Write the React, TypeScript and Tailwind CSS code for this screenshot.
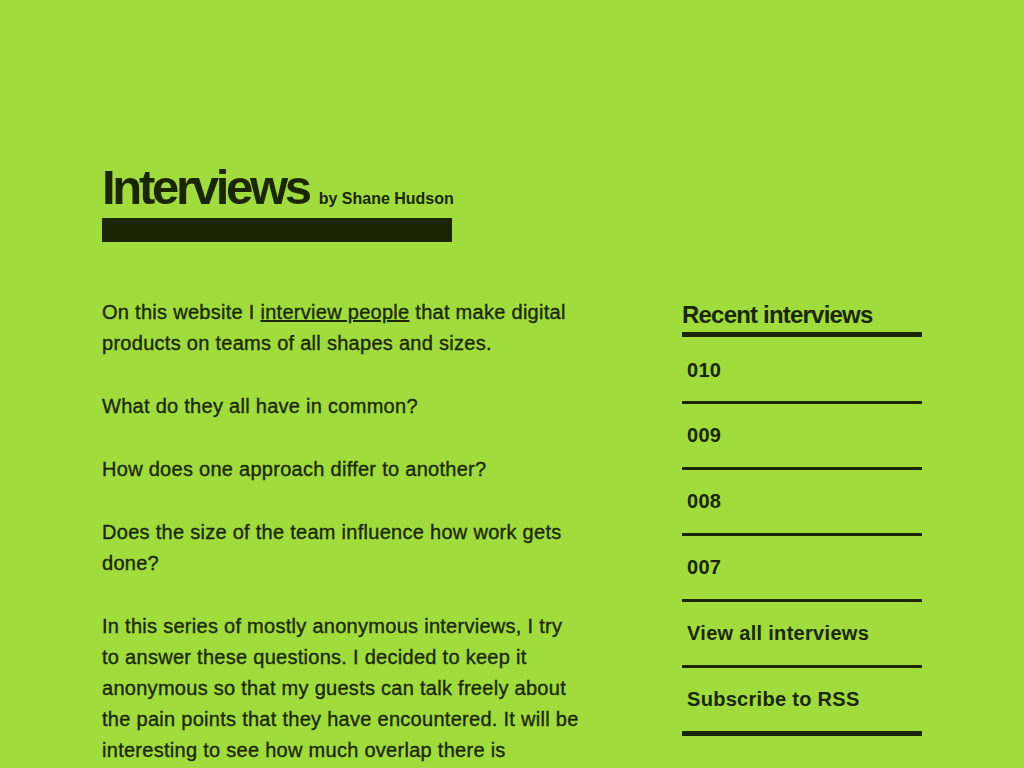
export default function App() {
  const items = ["010", "009", "008", "007", "View all interviews", "Subscribe to RSS"];
  return (
    <div className="min-h-[768px] bg-[#a0dd3c] text-[#1b2600]" style={{ fontFamily: '"Liberation Sans", Arial, sans-serif' }}>
      <div className="mx-auto w-[820px] pt-[163px]">
        <header className="inline-block">
          <h1 className="flex items-baseline gap-[10px] leading-none">
            <span className="text-[49px] font-bold tracking-[-3.3px]">Interviews</span>
            <span className="text-[16px] font-bold">by Shane Hudson</span>
          </h1>
          <div className="mt-[6px] h-[24px] w-[350px] bg-[#1b2600]" />
        </header>
        <div className="mt-[55px] flex justify-between">
          <main className="w-[478px] text-[20px] leading-[31px] tracking-[0.28px] [-webkit-text-stroke:0.35px_#1b2600]">
            <p>
              On this website I <a href="#" className="underline">interview people</a> that make digital products on teams of all shapes and sizes.
            </p>
            <p className="mt-[32px]">What do they all have in common?</p>
            <p className="mt-[32px]">How does one approach differ to another?</p>
            <p className="mt-[32px]">Does the size of the team influence how work gets done?</p>
            <p className="mt-[32px]">
              In this series of mostly anonymous interviews, I try to answer these questions. I decided to keep it anonymous so that my guests can talk freely about the pain points that they have encountered. It will be interesting to see how much overlap there is between teams.
            </p>
          </main>
          <aside className="w-[240px] pt-[6px]">
            <h2 className="text-[24px] font-bold tracking-[-0.8px] leading-[24px]">Recent interviews</h2>
            <div className="mt-[5px] h-[5px] bg-[#1b2600]" />
            <ul>
              {items.map((t, i) => (
                <li key={t} className={i < items.length - 1 ? "border-b-[3px] border-[#1b2600]" : ""}>
                  <a href="#" className={`block px-[5px] text-[20px] font-bold leading-[24px] tracking-[0.3px] ${i === 0 ? "h-[64px] pt-[21px]" : "h-[63px] pt-[19px]"}`}>{t}</a>
                </li>
              ))}
            </ul>
            <div className="h-[5px] bg-[#1b2600]" />
          </aside>
        </div>
      </div>
    </div>
  );
}
